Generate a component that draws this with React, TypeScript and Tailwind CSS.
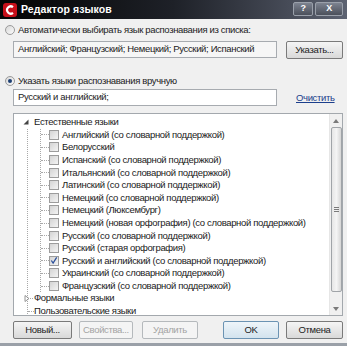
import React from 'react';

const children = [
  { label: 'Английский (со словарной поддержкой)' },
  { label: 'Белорусский' },
  { label: 'Испанский (со словарной поддержкой)' },
  { label: 'Итальянский (со словарной поддержкой)' },
  { label: 'Латинский (со словарной поддержкой)' },
  { label: 'Немецкий (со словарной поддержкой)' },
  { label: 'Немецкий (Люксембург)' },
  { label: 'Немецкий (новая орфография) (со словарной поддержкой)' },
  { label: 'Русский (со словарной поддержкой)' },
  { label: 'Русский (старая орфография)' },
  { label: 'Русский и английский (со словарной поддержкой)', checked: true },
  { label: 'Украинский (со словарной поддержкой)' },
  { label: 'Французский (со словарной поддержкой)' },
];

const Radio = ({ checked }: { checked?: boolean }) => (
  <div className="w-[10px] h-[10px] rounded-full border border-[#9a9a9a] bg-gradient-to-br from-[#d8d8d8] to-[#fbfbfb] flex items-center justify-center shrink-0">
    {checked && <div className="w-[4px] h-[4px] rounded-full bg-[#1d3f73]" />}
  </div>
);

const Checkbox = ({ checked }: { checked?: boolean }) => (
  <div className="w-[10px] h-[10px] border border-[#9c9c9c] bg-gradient-to-br from-[#d4d4d4] to-[#f4f4f4] shrink-0 flex items-center justify-center">
    {checked && (
      <svg width="9" height="9" viewBox="0 0 9 9">
        <path d="M1.5 4.5 L3.5 7.5 L7.5 1" stroke="#2a4f9a" strokeWidth="1.4" fill="none" />
      </svg>
    )}
  </div>
);

const Btn = ({ label, disabled, primary, w }: { label: string; disabled?: boolean; primary?: boolean; w: string }) => (
  <div
    className={
      'h-[18px] rounded-[2px] border flex items-center justify-center whitespace-nowrap ' + w + ' ' +
      (disabled
        ? 'border-[#b5b9bc] bg-[#f4f4f4] text-[#a3a3a3]'
        : primary
        ? 'border-[#6b93b3] bg-gradient-to-b from-[#eef5fa] to-[#d3e3ee] text-[#222]'
        : 'border-[#7a7a7a] bg-gradient-to-b from-[#f5f5f5] to-[#d9d9d9] text-[#222]')
    }
  >
    {label}
  </div>
);

const App = () => {
  return (
    <div className="w-[347px] h-[346px] bg-[#f0f0f0] flex flex-col overflow-hidden text-[9.5px] tracking-[-0.35px] text-[#222] font-['Liberation_Sans',sans-serif] border-b-[3px] border-[#9aa0a8]">
      {/* title bar */}
      <div className="h-[19px] shrink-0 bg-gradient-to-r from-[#050505] via-[#1e2128] to-[#5d6372] flex items-center pl-[3px] pr-[4px]">
        <div className="w-[14px] h-[14px] rounded-[3px] bg-[#c8101a] flex items-center justify-center">
          <svg width="10" height="10" viewBox="0 0 10 10">
            <path d="M8 2.2 A3.6 3.6 0 1 0 8 7.8" stroke="#fff" strokeWidth="2.2" fill="none" />
          </svg>
        </div>
        <span className="ml-[4px] text-white font-bold text-[10.5px] tracking-[0.1px]">Редактор языков</span>
        <div className="ml-auto flex gap-[2px] items-start self-start pt-[2px]">
          <div className="w-[20px] h-[14px] rounded-[2px] border border-[#9aa0aa] bg-gradient-to-b from-[#7d8390] to-[#4b505b] text-white text-[9px] font-bold flex items-center justify-center">?</div>
          <div className="w-[28px] h-[14px] rounded-[2px] border border-[#9aa0aa] bg-gradient-to-b from-[#7d8390] to-[#4b505b] text-white text-[9px] font-bold flex items-center justify-center">X</div>
        </div>
      </div>

      <div className="flex flex-col px-[4px] pt-[5px]">
        <div className="flex items-center gap-[3px] h-[12px] pl-[1px]">
          <Radio />
          <span className="whitespace-nowrap">Автоматически выбирать язык распознавания из списка:</span>
        </div>
        <div className="flex items-center mt-[3px] pl-[9px]">
          <div className="w-[264px] h-[17px] border border-[#a7abb0] bg-[#f6f6f6] flex items-center px-[4px] whitespace-nowrap overflow-hidden">
            Английский; Французский; Немецкий; Русский; Испанский
          </div>
          <div className="ml-[9px] mt-[2px]">
            <Btn label="Указать..." w="w-[57px]" />
          </div>
        </div>

        <div className="flex items-center gap-[3px] h-[12px] pl-[1px] mt-[16px]">
          <Radio checked />
          <span className="whitespace-nowrap">Указать языки распознавания вручную</span>
        </div>
        <div className="flex items-center mt-[2px] pl-[9px]">
          <div className="w-[264px] h-[17px] border border-[#a7abb0] bg-white flex items-center px-[4px] whitespace-nowrap">
            Русский и английский;
          </div>
          <span className="ml-[19px] mt-[2px] text-[#1c3f8c] underline">Очистить</span>
        </div>

        {/* tree */}
        <div className="ml-[9px] mt-[7px] w-[330px] h-[203px] border border-[#a3a8ad] bg-white flex overflow-hidden">
          <div className="flex-1 pt-[2px] text-[#1a1a1a] overflow-hidden">
            <div className="h-[12.6px] flex items-center pl-[9px]">
              <svg width="6" height="6" viewBox="0 0 6 6" className="shrink-0">
                <path d="M5.5 0.5 L5.5 5.5 L0.5 5.5 Z" fill="#444" />
              </svg>
              <span className="ml-[5px] whitespace-nowrap">Естественные языки</span>
            </div>
            <div className="ml-[13px] border-l border-dotted border-[#a8a8a8]">
              <div className="ml-[12px] border-l border-dotted border-[#a8a8a8]">
                {children.map((c) => (
                  <div key={c.label} className="h-[12.6px] flex items-center">
                    <div className="w-[8px] border-t border-dotted border-[#a8a8a8] shrink-0" />
                    <Checkbox checked={c.checked} />
                    <span className="ml-[3px] whitespace-nowrap">{c.label}</span>
                  </div>
                ))}
              </div>
              <div className="h-[12.6px] flex items-center -ml-[4px]">
                <svg width="6" height="7" viewBox="0 0 6 7" className="shrink-0">
                  <path d="M1 0.5 L5 3.5 L1 6.5 Z" fill="none" stroke="#8a8a8a" strokeWidth="0.9" />
                </svg>
                <div className="w-[3px] border-t border-dotted border-[#a8a8a8]" />
                <span className="ml-[1px] whitespace-nowrap">Формальные языки</span>
              </div>
              <div className="h-[12.6px] flex items-center">
                <div className="w-[6px] border-t border-dotted border-[#a8a8a8]" />
                <span className="whitespace-nowrap">Пользовательские языки</span>
              </div>
            </div>
          </div>
          {/* scrollbar */}
          <div className="w-[13px] shrink-0 bg-[#f0f0f0] flex flex-col items-center border-l border-[#e6e6e6]">
            <div className="h-[13px] flex items-center justify-center">
              <svg width="6" height="4" viewBox="0 0 6 4"><path d="M0 4 L3 0 L6 4 Z" fill="#7a7a7a" /></svg>
            </div>
            <div className="w-[11px] h-[165px] border border-[#a0a4a8] rounded-[2px] bg-gradient-to-r from-[#e6e6e6] via-[#f4f4f4] to-[#d6d6d6] flex items-center justify-center">
              <div className="flex flex-col gap-[1px]">
                <div className="w-[5px] h-px bg-[#7a7a7a]" />
                <div className="w-[5px] h-px bg-[#7a7a7a]" />
                <div className="w-[5px] h-px bg-[#7a7a7a]" />
              </div>
            </div>
            <div className="flex-1" />
            <div className="h-[13px] flex items-center justify-center">
              <svg width="6" height="4" viewBox="0 0 6 4"><path d="M0 0 L3 4 L6 0 Z" fill="#7a7a7a" /></svg>
            </div>
          </div>
        </div>

        {/* buttons */}
        <div className="flex items-center mt-[5px] pl-[9px]">
          <Btn label="Новый..." w="w-[60px]" />
          <div className="ml-[7px]"><Btn label="Свойства..." disabled w="w-[54px]" /></div>
          <div className="ml-[9px]"><Btn label="Удалить" disabled w="w-[56px]" /></div>
          <div className="ml-[25px]"><Btn label="OK" primary w="w-[56px]" /></div>
          <div className="ml-[7px]"><Btn label="Отмена" w="w-[57px]" /></div>
        </div>
      </div>
    </div>
  );
};

export default App;
